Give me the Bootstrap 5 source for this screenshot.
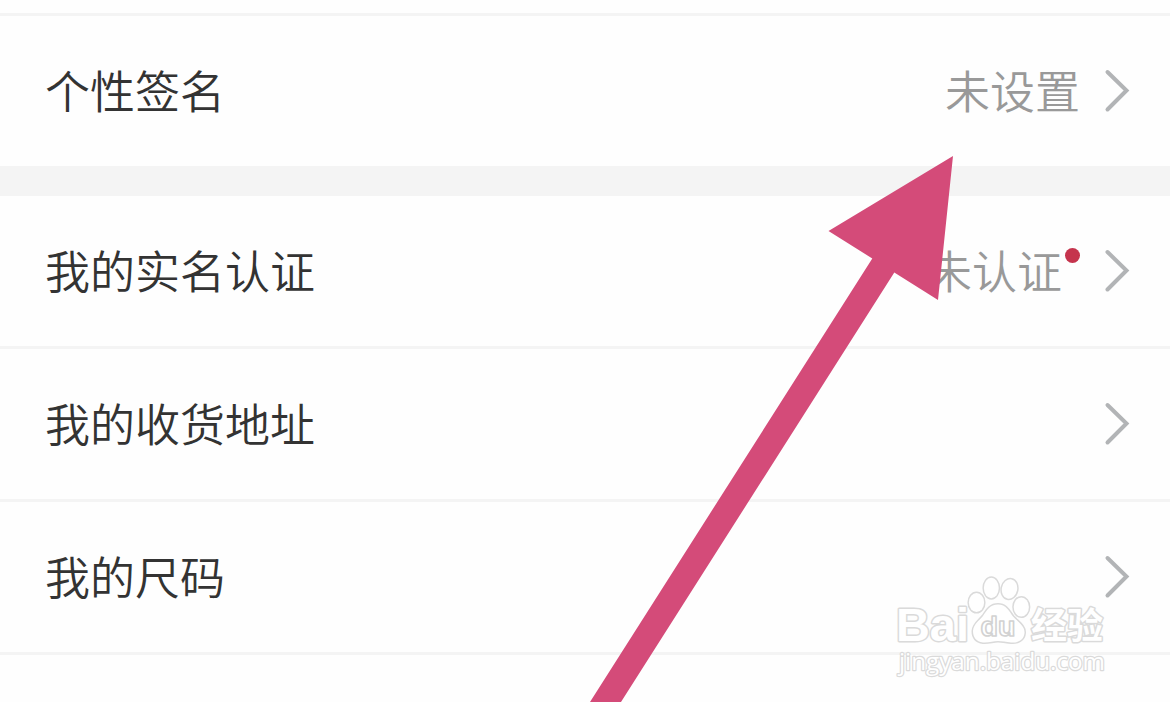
<!DOCTYPE html>
<html lang="zh-CN">
<head>
  <meta charset="UTF-8">
  <meta name="viewport" content="width=device-width, initial-scale=1">
  <title>个人资料</title>
  <link rel="stylesheet" href="https://cdn.jsdelivr.net/npm/bootstrap@5.3.0/dist/css/bootstrap.min.css">
  <style>
    body {
      height: 702px;
      font-family: "Noto Sans CJK SC", sans-serif;
      font-size: 45px;
      line-height: 1;
      color: #333;
      background: #fefefe;
    }
    .setting-top { height: 16px; border-bottom: 3px solid #f4f4f4; }
    .setting-row { height: 150px; padding: 0 40px 0 45px; }
    .setting-line { height: 153px; border-bottom: 3px solid #f4f4f4; }
    .setting-gap { height: 30px; background: #f4f4f4; }
    .setting-label { font-weight: 350; padding-bottom: 3px; }
    .setting-value { font-weight: 350; padding-bottom: 3px; color: #999; margin-right: 24px; }
    .setting-value.with-dot { margin-right: 42px; }
    .red-dot {
      right: -18px;
      top: 1px;
      width: 15px;
      height: 15px;
      background: #c5344d;
    }
    .chevron { width: 26px; height: 44px; fill: none; stroke: #b2b4b6; stroke-width: 4; stroke-linecap: round; }
  </style>
</head>
<body class="position-relative overflow-hidden">

<div class="setting-top"></div>

<div class="setting-row d-flex align-items-center">
  <span class="setting-label me-auto">个性签名</span>
  <span class="setting-value">未设置</span>
  <svg class="chevron" viewBox="0 0 26 44"><path d="M3.500 3L22.500 21.500L3.500 40.500"/></svg>
</div>

<div class="setting-gap"></div>

<div class="setting-row setting-line d-flex align-items-center">
  <span class="setting-label me-auto">我的实名认证</span>
  <span class="setting-value with-dot position-relative">未认证<i class="red-dot position-absolute rounded-circle"></i></span>
  <svg class="chevron" viewBox="0 0 26 44"><path d="M3.500 3L22.500 21.500L3.500 40.500"/></svg>
</div>
<div class="setting-row setting-line d-flex align-items-center">
  <span class="setting-label me-auto">我的收货地址</span>
  <svg class="chevron" viewBox="0 0 26 44"><path d="M3.500 3L22.500 21.500L3.500 40.500"/></svg>
</div>
<div class="setting-row setting-line d-flex align-items-center">
  <span class="setting-label me-auto">我的尺码</span>
  <svg class="chevron" viewBox="0 0 26 44"><path d="M3.500 3L22.500 21.500L3.500 40.500"/></svg>
</div>

<!-- Arrow and watermark over the list -->
<svg class="position-absolute top-0 start-0" width="1170" height="702" viewBox="0 0 1170 702">
  <path fill="#d44b79" d="M953 156L938 300L894.3 272.5L621 702H590L872.3 258.5L828.5 231Z"/>
  <g fill="#fff" stroke="#dadada" stroke-width="3" stroke-linejoin="round" paint-order="stroke">
    <text x="896" y="641" font-family="Liberation Sans, sans-serif" font-weight="700" font-size="46" textLength="73" lengthAdjust="spacingAndGlyphs">Bai</text>
    <ellipse cx="976.5" cy="602.5" rx="7.600" ry="9.600"/>
    <ellipse cx="991.3" cy="588" rx="7.400" ry="10.2"/>
    <ellipse cx="1009.5" cy="589" rx="7.600" ry="9.800" transform="rotate(12 1009.5 589)"/>
    <ellipse cx="1021.3" cy="607" rx="7.600" ry="9.600"/>
    <path d="M998 604.500C1006 604.500 1009 611 1013 616.500C1018 622 1025 626 1024.500 633C1024 640 1018 643 1011 642.500C1006 642 1002 641 998 641C993 641 989 643 983 642.500C976 641.500 973 637 973 631C973.500 624 979 621 983 616C987 610 990 604.500 998 604.500Z"/>
    <text x="980.5" y="636" font-family="Liberation Sans, sans-serif" font-weight="700" font-size="28" textLength="35" lengthAdjust="spacingAndGlyphs" stroke="#d2d2d2" stroke-width="1.6" paint-order="normal">du</text>
    <text x="1031" y="639" font-family="Noto Sans CJK SC, sans-serif" font-weight="700" font-size="36" textLength="72">经验</text>
    <text x="899" y="669.5" font-family="Open Sans, sans-serif" font-size="23.5" textLength="206" lengthAdjust="spacingAndGlyphs" stroke-width="2.4">jingyan.baidu.com</text>
  </g>
</svg>

<script src="https://cdn.jsdelivr.net/npm/bootstrap@5.3.0/dist/js/bootstrap.bundle.min.js"></script>
</body>
</html>
